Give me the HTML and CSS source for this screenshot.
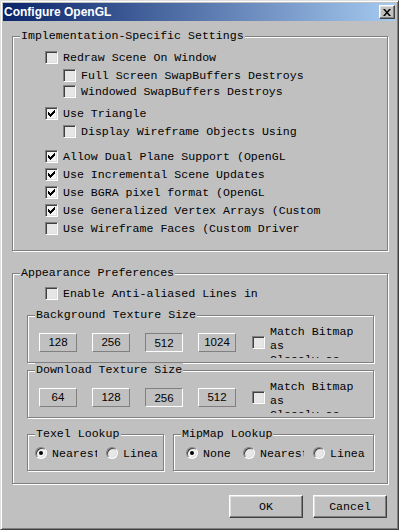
FILE: index.html
```html
<!DOCTYPE html>
<html lang="en">
<head>
    <meta charset="UTF-8">
    <title>Configure OpenGL</title>
    <link rel="stylesheet" href="styles.css">
</head>
<body>
<div class="window">
    <div class="titlebar">
        <span class="title">Configure OpenGL</span>
        <span class="close">
            <svg width="8" height="7" viewBox="0 0 8 7"><path d="M0 0h2l2 2.5 2-2.5h2l-3 3.5 3 3.5h-2l-2-2.5-2 2.5h-2l3-3.5z" fill="#000"/></svg>
        </span>
    </div>
    <div class="client">
        <fieldset class="group">
            <legend>Implementation-Specific Settings</legend>
            <div class="impl-body">
                <div class="opt"><span class="cb"></span><span>Redraw Scene On Window</span></div>
                <div class="opt sub"><span class="cb"></span><span>Full Screen SwapBuffers Destroys</span></div>
                <div class="opt sub tight"><span class="cb"></span><span>Windowed SwapBuffers Destroys</span></div>
                <div class="opt gap-a"><span class="cb on"></span><span>Use Triangle</span></div>
                <div class="opt sub"><span class="cb"></span><span>Display Wireframe Objects Using</span></div>
                <div class="opt gap-b"><span class="cb on"></span><span>Allow Dual Plane Support (OpenGL</span></div>
                <div class="opt"><span class="cb on"></span><span>Use Incremental Scene Updates</span></div>
                <div class="opt"><span class="cb on"></span><span>Use BGRA pixel format (OpenGL</span></div>
                <div class="opt"><span class="cb on"></span><span>Use Generalized Vertex Arrays (Custom</span></div>
                <div class="opt"><span class="cb"></span><span>Use Wireframe Faces (Custom Driver</span></div>
            </div>
        </fieldset>

        <fieldset class="group appear">
            <legend>Appearance Preferences</legend>
            <div class="appear-body">
                <div class="opt aa"><span class="cb"></span><span>Enable Anti-aliased Lines in</span></div>

                <fieldset class="group tex">
                    <legend>Background Texture Size</legend>
                    <div class="tex-row">
                        <span class="tbtn">128</span>
                        <span class="tbtn">256</span>
                        <span class="tbtn down">512</span>
                        <span class="tbtn">1024</span>
                        <span class="cb match-cb"></span>
                        <span class="match">Match Bitmap<br>as<br>Closely as</span>
                    </div>
                </fieldset>

                <fieldset class="group tex dl">
                    <legend>Download Texture Size</legend>
                    <div class="tex-row">
                        <span class="tbtn">64</span>
                        <span class="tbtn">128</span>
                        <span class="tbtn down">256</span>
                        <span class="tbtn">512</span>
                        <span class="cb match-cb"></span>
                        <span class="match">Match Bitmap<br>as<br>Closely as</span>
                    </div>
                </fieldset>

                <div class="lookups">
                    <fieldset class="group texel">
                        <legend>Texel Lookup</legend>
                        <div class="radios texel-radios">
                            <div class="radio"><span class="rb on"></span><span class="rlabel">Nearest</span></div>
                            <div class="radio"><span class="rb"></span><span class="rlabel">Linear</span></div>
                        </div>
                    </fieldset>
                    <fieldset class="group mipmap">
                        <legend>MipMap Lookup</legend>
                        <div class="radios mip-radios">
                            <div class="radio"><span class="rb on"></span><span class="rlabel">None</span></div>
                            <div class="radio"><span class="rb"></span><span class="rlabel">Nearest</span></div>
                            <div class="radio"><span class="rb"></span><span class="rlabel">Linear</span></div>
                        </div>
                    </fieldset>
                </div>
            </div>
        </fieldset>

        <div class="actions">
            <span class="btn">OK</span>
            <span class="btn">Cancel</span>
        </div>
    </div>
</div>
</body>
</html>
```

FILE: styles.css
```css
* {
    padding: 0;
    margin: 0;
    box-sizing: border-box;
}

body {
    width: 399px;
    height: 530px;
    background: #c0c0c0;
    font-family: "Liberation Mono", "DejaVu Sans Mono", monospace;
    font-size: 11.6px;
    color: #000;
}

.window {
    width: 399px;
    height: 530px;
    background: #c0c0c0;
    border: 1px solid;
    border-color: #dfdfdf #404040 #404040 #dfdfdf;
    box-shadow: inset 1px 1px 0 #fff, inset -1px -1px 0 #808080;
    padding: 2px;
}

/* title bar */
.titlebar {
    height: 18px;
    display: flex;
    align-items: center;
    padding-left: 1px;
    background: linear-gradient(to right, #0a246a, #a6caf0);
}

.title {
    flex: 1;
    color: #fff;
    font-family: "Liberation Sans", Arial, sans-serif;
    font-weight: bold;
    font-size: 12px;
}

.close {
    width: 16px;
    height: 14px;
    margin-right: 1px;
    display: flex;
    align-items: center;
    justify-content: center;
    background: #c0c0c0;
    border: 1px solid;
    border-color: #fff #404040 #404040 #fff;
    box-shadow: inset -1px -1px 0 #808080, inset 1px 1px 0 #dfdfdf;
}

.client {
    padding: 8px 8px 0 9px;
}

/* group boxes */
.group {
    border: 1px solid #808080;
    box-shadow: inset 1px 1px 0 #fff, 1px 1px 0 #fff;
    min-width: 0;
}

.group legend {
    margin-left: 7px;
    padding: 0 1px;
    line-height: 14px;
    height: 14px;
    background: #c0c0c0;
    white-space: nowrap;
}

.impl-body {
    padding: 6px 0 14px 32px;
}

.opt {
    height: 16px;
    margin-top: 2px;
    display: flex;
    align-items: center;
    gap: 5px;
    white-space: nowrap;
}

.impl-body .opt:first-child {
    margin-top: 0;
}

.opt.sub {
    margin-left: 18px;
}

.opt.tight {
    margin-top: 0;
}

.opt.gap-a {
    margin-top: 6px;
}

.opt.gap-b {
    margin-top: 9px;
}

/* checkbox */
.cb {
    flex: none;
    width: 13px;
    height: 13px;
    border: 1px solid;
    border-color: #808080 #fff #fff #808080;
    box-shadow: inset 1px 1px 0 #404040, inset -1px -1px 0 #dfdfdf;
    background: #e6e6e6;
}

.cb.on {
    background: #f4f4f4 url("data:image/svg+xml,%3Csvg xmlns='http://www.w3.org/2000/svg' width='11' height='11' viewBox='0 0 11 11'%3E%3Cpath d='M2 4h1v1h1v1h1V5h1V4h1V3h1V2h1v3H8v1H7v1H6v1H5v1H4V8H3V7H2z' fill='%23000'/%3E%3C/svg%3E") no-repeat 0 0;
}

.appear {
    margin-top: 15px;
}

.appear-body {
    padding: 5px 13px 12px 14px;
}

.opt.aa {
    margin: 0 0 0 18px;
}

.tex {
    margin-top: 7px;
}

.tex.dl {
    margin-top: 0;
}

.tex-row {
    height: 34px;
    margin: 3px 0 3px 11px;
    display: flex;
    align-items: center;
}

.tbtn {
    width: 38px;
    height: 19px;
    margin-right: 15px;
    display: flex;
    align-items: center;
    justify-content: center;
    font-family: "Liberation Sans", Arial, sans-serif;
    font-size: 11.5px;
    border: 1px solid;
    border-color: #fff #808080 #808080 #fff;
}

.tbtn:nth-child(4) {
    margin-right: 16px;
}

.tbtn.down {
    border-color: #808080 #fff #fff #808080;
    padding-top: 2px;
}

.match-cb {
    margin-right: 5px;
}

.match {
    align-self: flex-start;
    width: 95px;
    height: 33px;
    line-height: 14px;
    overflow: hidden;
    white-space: nowrap;
}

/* lookup radios */
.lookups {
    margin-top: 9px;
    display: flex;
    gap: 9px;
}

.texel {
    width: 137px;
}

.mipmap {
    flex: 1;
}

.radios {
    display: grid;
    column-gap: 9px;
    padding: 4px 0 9px;
}

.texel-radios {
    grid-template-columns: 62px 52px;
    padding-left: 7px;
}

.mip-radios {
    grid-template-columns: 48px 61px 52px;
    padding-left: 12px;
}

.radio {
    height: 16px;
    display: flex;
    align-items: center;
    gap: 5px;
    overflow: hidden;
}

.rlabel {
    white-space: nowrap;
    overflow: hidden;
    flex: 1;
}

.rb {
    flex: none;
    position: relative;
    width: 12px;
    height: 12px;
    border-radius: 50%;
    border: 1px solid;
    border-color: #808080 #fff #fff #808080;
    box-shadow: inset 1px 1px 0 #404040, inset -1px -1px 0 #dfdfdf;
    background: #e8e8e8;
}

.rb.on {
    background: #f4f4f4;
}

.rb.on::after {
    content: "";
    position: absolute;
    left: 3px;
    top: 3px;
    width: 4px;
    height: 4px;
    border-radius: 50%;
    background: #000;
}

/* dialog buttons */
.actions {
    margin: 11px 1px 0 0;
    display: flex;
    justify-content: flex-end;
    gap: 10px;
}

.btn {
    width: 74px;
    height: 23px;
    display: flex;
    align-items: center;
    justify-content: center;
    border: 1px solid;
    border-color: #fff #404040 #404040 #fff;
    box-shadow: inset -1px -1px 0 #808080, inset 1px 1px 0 #dfdfdf;
}
```
